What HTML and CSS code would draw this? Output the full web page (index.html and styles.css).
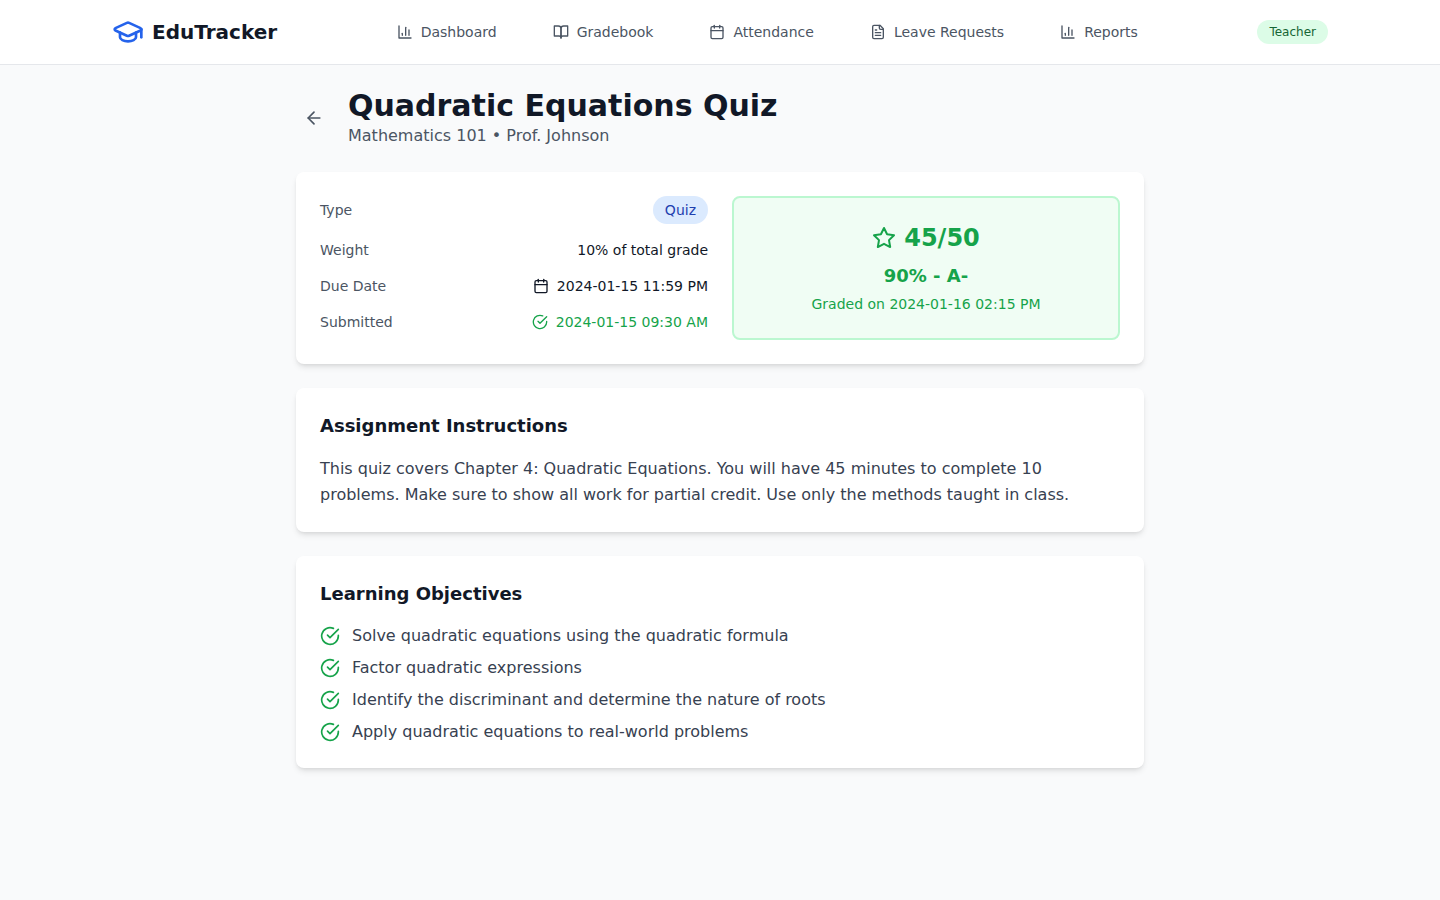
FILE: index.html
```html
<!DOCTYPE html>
<html lang="en">
<head>
<meta charset="utf-8">
<meta name="viewport" content="width=device-width, initial-scale=1">
<title>Quadratic Equations Quiz - EduTracker</title>
<link rel="stylesheet" href="styles.css">
</head>
<body>
<svg class="sprite" aria-hidden="true">
  <symbol id="cap" viewBox="0 0 24 24"><path d="M21.42 10.922a1 1 0 0 0-.019-1.838L12.83 5.18a2 2 0 0 0-1.66 0L2.6 9.08a1 1 0 0 0 0 1.832l8.57 3.908a2 2 0 0 0 1.66 0z"/><path d="M22 10v6"/><path d="M6 12.5V16a6 3 0 0 0 12 0v-3.5"/></symbol>
  <symbol id="chart" viewBox="0 0 24 24"><path d="M3 3v18h18"/><path d="M18 17V9"/><path d="M13 17V5"/><path d="M8 17v-3"/></symbol>
  <symbol id="book" viewBox="0 0 24 24"><path d="M2 3h6a4 4 0 0 1 4 4v14a3 3 0 0 0-3-3H2z"/><path d="M22 3h-6a4 4 0 0 0-4 4v14a3 3 0 0 1 3-3h7z"/></symbol>
  <symbol id="calendar" viewBox="0 0 24 24"><path d="M8 2v4"/><path d="M16 2v4"/><rect width="18" height="18" x="3" y="4" rx="2"/><path d="M3 10h18"/></symbol>
  <symbol id="file" viewBox="0 0 24 24"><path d="M15 2H6a2 2 0 0 0-2 2v16a2 2 0 0 0 2 2h12a2 2 0 0 0 2-2V7Z"/><path d="M14 2v4a2 2 0 0 0 2 2h4"/><path d="M10 9H8"/><path d="M16 13H8"/><path d="M16 17H8"/></symbol>
  <symbol id="arrow" viewBox="0 0 24 24"><path d="m12 19-7-7 7-7"/><path d="M19 12H5"/></symbol>
  <symbol id="check" viewBox="0 0 24 24"><path d="M22 11.08V12a10 10 0 1 1-5.93-9.14"/><path d="m9 11 3 3L22 4"/></symbol>
  <symbol id="star" viewBox="0 0 24 24"><path d="M12 2l3.09 6.26L22 9.27l-5 4.87 1.18 6.88L12 17.77l-6.18 3.25L7 14.14 2 9.27l6.91-1.01L12 2z"/></symbol>
</svg>

<header class="topbar">
  <div class="topbar-inner">
    <a class="brand" href="#"><svg class="icon icon-xl"><use href="#cap"/></svg>EduTracker</a>
    <nav class="nav" aria-label="Main">
      <a class="nav-link" href="#"><svg class="icon"><use href="#chart"/></svg>Dashboard</a>
      <a class="nav-link" href="#"><svg class="icon"><use href="#book"/></svg>Gradebook</a>
      <a class="nav-link" href="#"><svg class="icon"><use href="#calendar"/></svg>Attendance</a>
      <a class="nav-link" href="#"><svg class="icon"><use href="#file"/></svg>Leave Requests</a>
      <a class="nav-link" href="#"><svg class="icon"><use href="#chart"/></svg>Reports</a>
    </nav>
    <span class="role">Teacher</span>
  </div>
</header>

<main class="page">
  <div class="page-head">
    <button class="back" type="button" aria-label="Back"><svg class="icon icon-md"><use href="#arrow"/></svg></button>
    <div>
      <h1 class="title">Quadratic Equations Quiz</h1>
      <p class="subtitle">Mathematics 101 • Prof. Johnson</p>
    </div>
  </div>

  <section class="card summary">
    <dl class="facts">
      <div class="fact"><dt>Type</dt><dd class="type">Quiz</dd></div>
      <div class="fact"><dt>Weight</dt><dd>10% of total grade</dd></div>
      <div class="fact"><dt>Due Date</dt><dd><svg class="icon"><use href="#calendar"/></svg>2024-01-15 11:59 PM</dd></div>
      <div class="fact"><dt>Submitted</dt><dd class="done"><svg class="icon"><use href="#check"/></svg>2024-01-15 09:30 AM</dd></div>
    </dl>
    <div class="grade">
      <p class="score"><svg class="icon icon-lg"><use href="#star"/></svg>45/50</p>
      <p class="percent">90% - A-</p>
      <p class="graded">Graded on 2024-01-16 02:15 PM</p>
    </div>
  </section>

  <section class="card">
    <h2 class="heading">Assignment Instructions</h2>
    <p class="prose">This quiz covers Chapter 4: Quadratic Equations. You will have 45 minutes to complete 10 problems. Make sure to show all work for partial credit. Use only the methods taught in class.</p>
  </section>

  <section class="card">
    <h2 class="heading">Learning Objectives</h2>
    <ul class="goals">
      <li class="goal"><svg class="icon icon-md"><use href="#check"/></svg>Solve quadratic equations using the quadratic formula</li>
      <li class="goal"><svg class="icon icon-md"><use href="#check"/></svg>Factor quadratic expressions</li>
      <li class="goal"><svg class="icon icon-md"><use href="#check"/></svg>Identify the discriminant and determine the nature of roots</li>
      <li class="goal"><svg class="icon icon-md"><use href="#check"/></svg>Apply quadratic equations to real-world problems</li>
    </ul>
  </section>
</main>
</body>
</html>
```
FILE: styles.css
```css
*, *::before, *::after { box-sizing: border-box; }
h1, h2, p, ul, dl, dd { margin: 0; padding: 0; }

body {
  margin: 0;
  min-height: 100vh;
  background: #f9fafb;
  color: #111827;
  font: 16px/24px "DejaVu Sans", sans-serif;
}

a { color: inherit; text-decoration: none; }

.sprite { display: none; }

.icon {
  flex: none;
  width: 16px;
  height: 16px;
  fill: none;
  stroke: currentColor;
  stroke-width: 2;
  stroke-linecap: round;
  stroke-linejoin: round;
}
.icon-md { width: 20px; height: 20px; }
.icon-lg { width: 24px; height: 24px; }
.icon-xl { width: 32px; height: 32px; color: #2563eb; }

.topbar {
  position: sticky;
  top: 0;
  background: #fff;
  box-shadow: 0 1px 0 #e5e7eb;
}
.topbar-inner {
  display: flex;
  align-items: center;
  justify-content: space-between;
  max-width: 1280px;
  min-height: 64px;
  margin: 0 auto;
  padding: 0 32px;
}
.brand {
  display: flex;
  align-items: center;
  gap: 8px;
  font-size: 20px;
  line-height: 28px;
  font-weight: 700;
}
.nav { display: flex; gap: 32px; }
.nav-link {
  display: flex;
  align-items: center;
  gap: 8px;
  padding: 8px 12px;
  color: #4b5563;
  font-size: 14px;
  line-height: 20px;
}
.role {
  padding: 4px 12px;
  border-radius: 999px;
  background: #dcfce7;
  color: #166534;
  font-size: 12px;
  line-height: 16px;
}

.page {
  display: flex;
  flex-direction: column;
  gap: 24px;
  max-width: 896px;
  margin: 0 auto;
  padding: 24px;
}
.page-head { display: flex; align-items: center; gap: 16px; }
.back {
  display: flex;
  padding: 8px;
  border: 0;
  border-radius: 8px;
  background: none;
  color: #4b5563;
  cursor: pointer;
}
.title { font-size: 30px; line-height: 36px; font-weight: 700; }
.subtitle { color: #4b5563; }

.card {
  padding: 24px;
  border-radius: 8px;
  background: #fff;
  box-shadow: 0 4px 6px -1px rgb(0 0 0 / 0.1), 0 2px 4px -2px rgb(0 0 0 / 0.1);
}
.summary { display: grid; grid-template-columns: 1fr 1fr; gap: 24px; }

.facts {
  display: flex;
  flex-direction: column;
  gap: 16px;
  font-size: 14px;
  line-height: 20px;
}
.fact { display: flex; align-items: center; justify-content: space-between; }
.fact dt { color: #4b5563; }
.fact dd { display: flex; align-items: center; gap: 8px; }
.fact .type {
  padding: 4px 12px;
  border-radius: 999px;
  background: #dbeafe;
  color: #1e40af;
}
.fact .done { color: #16a34a; }

.grade {
  padding: 24px;
  border: 2px solid #bbf7d0;
  border-radius: 8px;
  background: #f0fdf4;
  color: #16a34a;
  text-align: center;
}
.score {
  display: flex;
  align-items: center;
  justify-content: center;
  gap: 8px;
  margin-bottom: 8px;
  font-size: 24px;
  line-height: 32px;
  font-weight: 700;
}
.percent { margin-bottom: 4px; font-size: 18px; line-height: 28px; font-weight: 600; }
.graded { font-size: 14px; line-height: 20px; }

.heading { margin-bottom: 16px; font-size: 18px; line-height: 28px; font-weight: 600; }
.prose { color: #374151; line-height: 26px; }

.goals { display: flex; flex-direction: column; gap: 8px; list-style: none; }
.goal { display: flex; align-items: center; gap: 12px; color: #374151; }
.goal .icon { color: #16a34a; }
```
